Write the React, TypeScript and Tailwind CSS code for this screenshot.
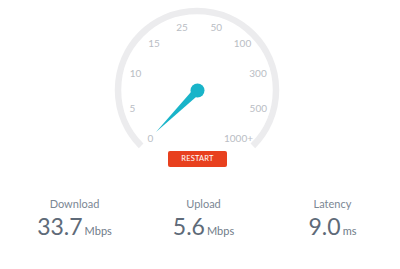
import React from "react";

const labels: { t: string; x: number; y: number }[] = [
  { t: "0", x: 150.5, y: 142.3 },
  { t: "5", x: 132.5, y: 112.3 },
  { t: "10", x: 135.5, y: 76.7 },
  { t: "15", x: 154, y: 47.3 },
  { t: "25", x: 182, y: 30.7 },
  { t: "50", x: 216.3, y: 30.7 },
  { t: "100", x: 242.5, y: 47.3 },
  { t: "300", x: 258, y: 76.7 },
  { t: "500", x: 258.3, y: 112.3 },
  { t: "1000+", x: 238.5, y: 142.3 },
];

function Gauge() {
  const cx = 197;
  const cy = 90;
  const r = 79;
  const a1 = (225 * Math.PI) / 180;
  const a2 = (-45 * Math.PI) / 180;
  const x1 = cx + r * Math.cos(a1);
  const y1 = cy - r * Math.sin(a1);
  const x2 = cx + r * Math.cos(a2);
  const y2 = cy - r * Math.sin(a2);
  const d = `M ${x1} ${y1} A ${r} ${r} 0 1 1 ${x2} ${y2}`;
  return (
    <svg width={400} height={151} viewBox="0 0 400 151" className="block">
      <path d={d} fill="none" stroke="#ececee" strokeWidth={6.5} />
      {labels.map((l) => (
        <text
          key={l.t}
          x={l.x}
          y={l.y}
          textAnchor="middle"
          fontFamily="Lato, sans-serif"
          fontSize={10}
          fill="#b9bdc4"
        >
          {l.t}
        </text>
      ))}
      <polygon points="200.3,93.3 194.7,87.7 156,132" fill="#19b4c9" />
      <circle cx={197.5} cy={90.5} r={7} fill="#19b4c9" />
    </svg>
  );
}

function Stat({ label, value, unit }: { label: string; value: string; unit: string }) {
  return (
    <div className="flex flex-col items-center">
      <div className="text-[11px] leading-[13px] text-[#7b8794]">{label}</div>
      <div className="mt-[2.5px] flex items-baseline">
        <span className="text-[23px] leading-[26px] text-[#5e6a78]">{value}</span>
        <span className="ml-[2px] text-[11px] leading-[13px] text-[#6f7b88]">{unit}</span>
      </div>
    </div>
  );
}

export default function App() {
  return (
    <div className="w-[400px] h-[269px] bg-white overflow-hidden" style={{ fontFamily: "Lato, sans-serif" }}>
      <Gauge />
      <div className="flex">
        <button className="ml-[168px] w-[59px] h-[16px] bg-[#e8401e] rounded-[2px] flex items-center justify-center text-white text-[7.5px] font-normal leading-none tracking-[0.2px]">
          RESTART
        </button>
      </div>
      <div className="mt-[30px] pl-[10px] grid grid-cols-[repeat(3,129px)]">
        <Stat label="Download" value="33.7" unit="Mbps" />
        <Stat label="Upload" value="5.6" unit="Mbps" />
        <Stat label="Latency" value="9.0" unit="ms" />
      </div>
    </div>
  );
}
